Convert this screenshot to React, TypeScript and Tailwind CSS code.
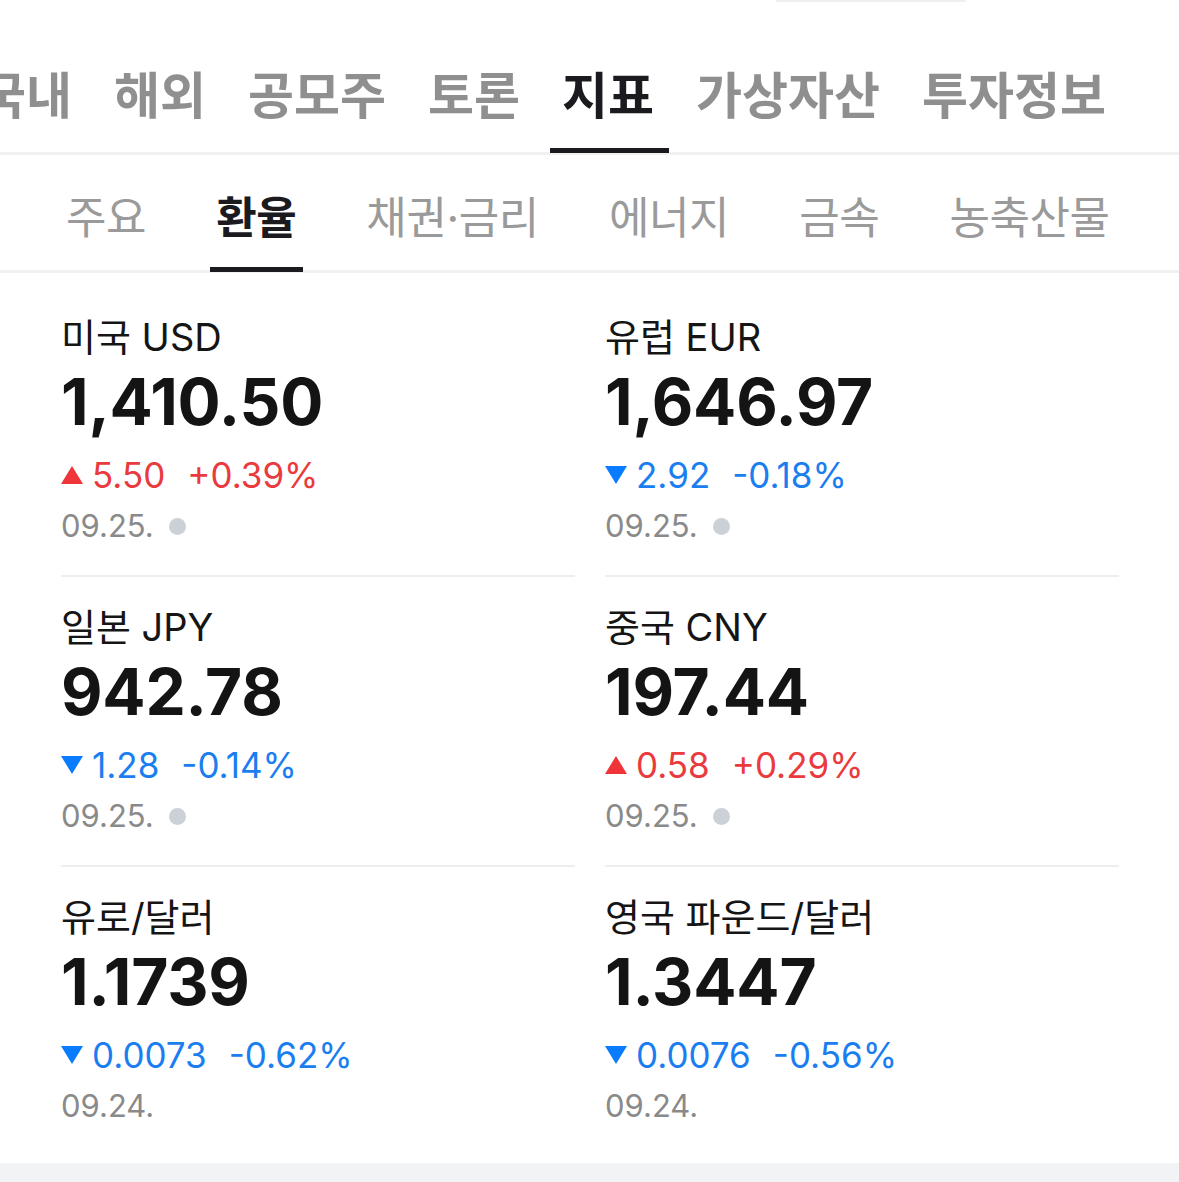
import React from 'react'

const MAIN_TABS = ['국내', '해외', '공모주', '토론', '지표', '가상자산', '투자정보']
const SUB_TABS = ['주요', '환율', '채권·금리', '에너지', '금속', '농축산물']

type Rate = {
  name: string
  value: string
  diff: string
  pct: string
  up: boolean
  date: string
  live: boolean
}

const RATES: Rate[] = [
  { name: '미국 USD', value: '1,410.50', diff: '5.50', pct: '+0.39%', up: true, date: '09.25.', live: true },
  { name: '유럽 EUR', value: '1,646.97', diff: '2.92', pct: '-0.18%', up: false, date: '09.25.', live: true },
  { name: '일본 JPY', value: '942.78', diff: '1.28', pct: '-0.14%', up: false, date: '09.25.', live: true },
  { name: '중국 CNY', value: '197.44', diff: '0.58', pct: '+0.29%', up: true, date: '09.25.', live: true },
  { name: '유로/달러', value: '1.1739', diff: '0.0073', pct: '-0.62%', up: false, date: '09.24.', live: false },
  { name: '영국 파운드/달러', value: '1.3447', diff: '0.0076', pct: '-0.56%', up: false, date: '09.24.', live: false },
]

function Triangle({ up }: { up: boolean }) {
  return (
    <svg width="22" height="18" viewBox="0 0 22 18" className="shrink-0">
      {up ? (
        <polygon points="11,0 22,18 0,18" fill="#f0353a" />
      ) : (
        <polygon points="0,0 22,0 11,18" fill="#0a7cff" />
      )}
    </svg>
  )
}

function RateCard({ rate, last }: { rate: Rate; last: boolean }) {
  const color = rate.up ? 'text-[#ea3a3d]' : 'text-[#1b7ef0]'
  return (
    <div className={`pt-[25px] ${last ? 'pb-[39px]' : 'pb-[31px] border-b-[2px] border-[#eeeeee]'}`}>
      <div className="h-[50px] text-[38px] leading-[50px] text-[#151515]">{rate.name}</div>
      <div className="h-[80px] text-[64px] leading-[80px] font-bold tracking-[-0.2px] text-[#141414]">
        {rate.value}
      </div>
      <div className={`h-[66px] flex items-center gap-[9px] text-[35px] leading-[66px] ${color}`}>
        <Triangle up={rate.up} />
        <span>{rate.diff}</span>
        <span className="ml-[13px]">{rate.pct}</span>
      </div>
      <div className="h-[36px] flex items-center gap-[15px] text-[31px] leading-[36px] text-[#8a8a8a]">
        <span>{rate.date}</span>
        {rate.live && <span className="w-[17px] h-[17px] rounded-full bg-[#ccd1d8]" />}
      </div>
    </div>
  )
}

export default function App() {
  return (
    <div className="w-[1179px] h-[1182px] overflow-hidden bg-white font-['Inter','Noto_Sans_CJK_KR',sans-serif]">
      {/* faint edge of the element above */}
      <div className="ml-[776px] w-[190px] h-[2px] bg-[#efefef]" />

      {/* Main tabs */}
      <div className="h-[153px] flex items-end border-b-[3px] border-[#f1f1f1]">
        <div className="flex gap-[15px] ml-[-32px]">
          {MAIN_TABS.map((t) => {
            const active = t === '지표'
            return (
              <div
                key={t}
                className={`relative pl-[12px] pr-[15px] pb-[26px] text-[50px] leading-[60px] font-bold whitespace-nowrap ${
                  active ? 'text-[#1b1b1f]' : 'text-[#8f8f8f]'
                }`}
              >
                {t}
                {active && <div className="absolute left-0 right-0 bottom-[-1px] h-[5px] bg-[#1b1b1f]" />}
              </div>
            )
          })}
        </div>
      </div>

      {/* Sub tabs */}
      <div className="h-[118px] flex items-end border-b-[3px] border-[#f1f1f1]">
        <div className="flex gap-[57px] ml-[60px]">
          {SUB_TABS.map((t) => {
            const active = t === '환율'
            return (
              <div
                key={t}
                className={`relative pl-[6px] pr-[7px] pb-[24px] text-[44px] leading-[56px] tracking-[-0.4px] whitespace-nowrap ${
                  active ? 'text-[#1b1b1f] font-bold' : 'text-[#9a9a9a]'
                }`}
              >
                {t}
                {active && <div className="absolute left-0 right-0 bottom-[-2px] h-[5px] bg-[#1b1b1f]" />}
              </div>
            )
          })}
        </div>
      </div>

      {/* Rates grid */}
      <div className="grid grid-cols-2 gap-x-[30px] pl-[61px] pr-[60px] pt-[14px]">
        {RATES.map((r, i) => (
          <RateCard key={r.name} rate={r} last={i >= 4} />
        ))}
      </div>

      <div className="h-[40px] bg-[#f2f3f5]" />
    </div>
  )
}
